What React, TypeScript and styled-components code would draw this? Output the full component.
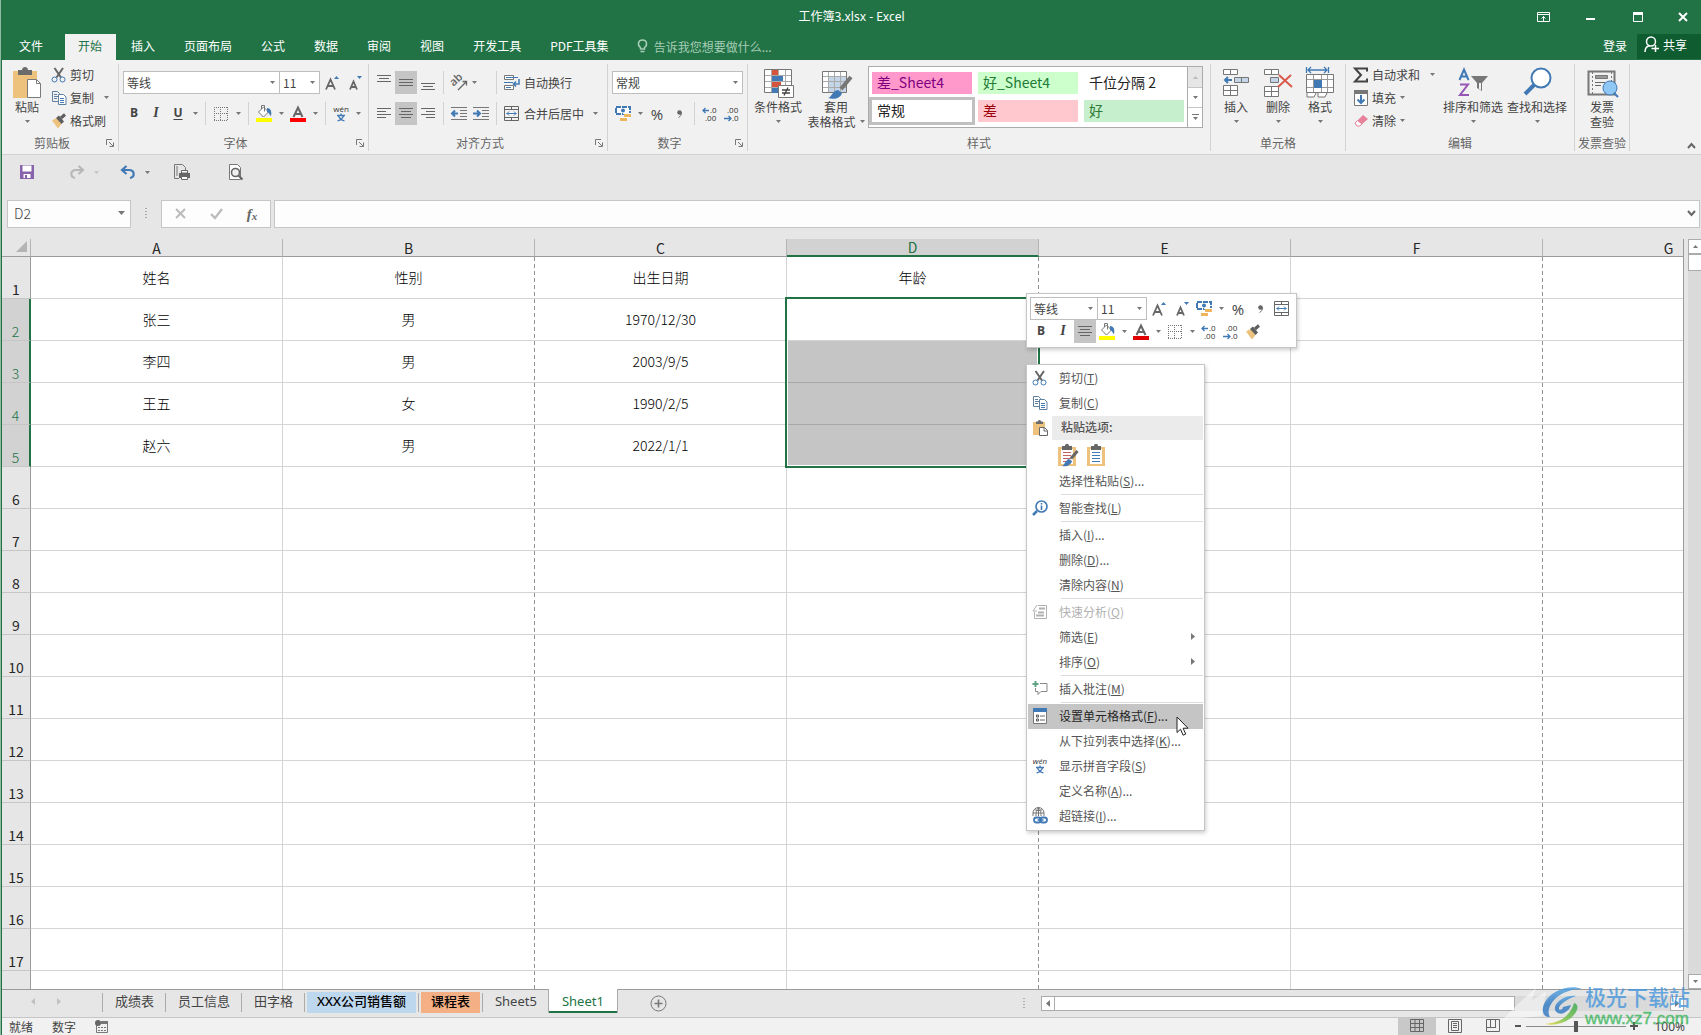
import React from "react";
import styled, { createGlobalStyle, css } from "styled-components";

const GREEN = "#217346";
const INK = "#444";
const GREY = "#777";
const BLUE = "#4179b5";

const Global = createGlobalStyle`
  *, *::after { box-sizing: border-box; }
  body { margin: 0; overflow: hidden; }
  button, input, select { font: inherit; color: inherit; margin: 0; padding: 0; border: 0; background: none; border-radius: 0; }
  input:focus { outline: none; }
  svg { display: block; flex: none; overflow: visible; }
`;

/* ---------- window shell ---------- */
const Window = styled.div`
  position: relative;
  display: flex;
  flex-direction: column;
  height: 100vh;
  border-left: 1px solid #8fb9a1;
  padding-left: 1px;
  background: ${GREEN};
  color: ${INK};
  font: 12px/15px "Noto Sans CJK SC", "Noto Sans", sans-serif;
`;
const TitleBar = styled.header`
  display: grid;
  grid-template-columns: 1fr auto 1fr;
  align-items: center;
  height: 34px;
  color: #fff;
`;
const Title = styled.h1`
  grid-column: 2;
  margin: 0;
  font: 12px/16px "Noto Sans", "Noto Sans CJK SC", sans-serif;
`;
const WindowButtons = styled.div`
  display: flex;
  justify-content: flex-end;
`;
const WindowButton = styled.button`
  display: grid;
  place-items: center;
  width: 47px;
  height: 30px;
  &:last-child { width: 40px; padding-left: 4px; }
`;
const TabBar = styled.nav`
  display: flex;
  height: 26px;
  color: #fff;
`;
const Tab = styled.button<{ $active?: boolean; $file?: boolean }>`
  padding: 0 14px 4px 15px;
  white-space: nowrap;
  ${p => p.$file && css`padding-left: 17px; padding-right: 22px;`}
  ${p => p.$active && css`padding-left: 13px; background: #f1f1f1; color: ${GREEN};`}
`;
const TellMe = styled.label`
  display: flex;
  align-items: center;
  gap: 6px;
  flex: 1;
  padding: 0 14px 2px;
  color: #a6cdb6;
  input { width: 140px; }
  input::placeholder { color: #a6cdb6; opacity: 1; }
`;
const Account = styled.button`padding: 0 10px 4px;`;
const Share = styled.button`
  display: flex;
  align-items: center;
  gap: 4px;
  width: 64px;
  height: 25px;
  padding: 0 0 4px 7px;
  background: #0e5c2f;
`;

/* ---------- ribbon ---------- */
const Ribbon = styled.section`
  display: flex;
  height: 95px;
  padding: 4px 0 3px;
  background: #f1f1f1;
  border-bottom: 1px solid #d2d2d2;
`;
const Group = styled.div<{ $w: number }>`
  display: flex;
  flex-direction: column;
  flex: none;
  width: ${p => p.$w}px;
  border-right: 1px solid #d2d2d2;
`;
const GroupBody = styled.div<{ $pad?: number }>`
  display: flex;
  height: 70px;
  padding-left: ${p => p.$pad ?? 4}px;
`;
const GroupFoot = styled.div`
  display: flex;
  align-items: center;
  height: 17px;
  color: #666;
  span { flex: 1; text-align: center; white-space: nowrap; }
`;
const Launcher = styled.button`
  display: grid;
  place-items: center;
  width: 16px;
  height: 12px;
`;
const BigButton = styled.button<{ $w: number }>`
  display: flex;
  flex-direction: column;
  align-items: center;
  flex: none;
  width: ${p => p.$w}px;
  padding-top: 3px;
  white-space: nowrap;
`;
const LastLine = styled.span`
  display: flex;
  align-items: center;
  gap: 4px;
  height: 15px;
`;
const SmallColumn = styled.div<{ $w: number }>`
  display: flex;
  flex-direction: column;
  width: ${p => p.$w}px;
  margin-top: -1px;
`;
const SmallButton = styled.button<{ $far?: boolean }>`
  display: flex;
  align-items: center;
  height: 23px;
  white-space: nowrap;
  span { margin: 0 ${p => (p.$far ? 10 : 4)}px 0 3px; }
`;
const TwoRows = styled.div`
  display: flex;
  flex-direction: column;
  gap: 8px;
  padding-top: 7px;
`;
const ToolRow = styled.div`
  display: flex;
  height: 23px;
`;
const Tool = styled.button<{ $w?: number; $on?: boolean; $left?: boolean }>`
  display: flex;
  align-items: center;
  justify-content: ${p => (p.$left ? "flex-start" : "center")};
  flex: none;
  gap: 4px;
  width: ${p => p.$w ?? 22}px;
  height: 23px;
  padding-left: ${p => (p.$left ? 3 : 0)}px;
  white-space: nowrap;
  background: ${p => (p.$on ? "#c5c5c5" : "transparent")};
`;
const Glyph = styled.span<{ $italic?: boolean; $under?: boolean }>`
  padding-bottom: 2px;
  font: ${p => (p.$italic ? "italic 700 14px/16px 'Liberation Serif', serif" : "700 12px/16px 'Open Sans', sans-serif")};
  text-decoration: ${p => (p.$under ? "underline" : "none")};
  text-underline-offset: 2px;
`;
const Divider = styled.span`
  flex: none;
  width: 1px;
  height: 23px;
  margin: 0 4px;
  background: #d2d2d2;
`;
const ComboBox = styled.span<{ $w: number }>`
  display: grid;
  align-items: center;
  width: ${p => p.$w}px;
  height: 23px;
  background: #fff;
  border: 1px solid #bebebe;
  & + & { border-left-width: 0; }
  select, svg { grid-area: 1 / 1; }
  select { width: 100%; height: 100%; padding-left: 3px; appearance: none; outline: none; }
  svg { justify-self: end; margin-right: 4px; pointer-events: none; }
`;
const Percent = styled.span`font: 15px/20px "Open Sans", sans-serif;`;

/* ---------- style gallery ---------- */
const Gallery = styled.div`
  display: flex;
  width: 335px;
  height: 62px;
  margin: 2px 0 0 1px;
  background: #fff;
  border: 1px solid #ababab;
`;
const Swatches = styled.div`
  display: grid;
  grid-template-columns: repeat(3, 100px);
  grid-auto-rows: 22px;
  gap: 6px;
  flex: 1;
  padding: 5px 3px;
`;
const Swatch = styled.button<{ $bg: string; $fg: string; $picked?: boolean }>`
  padding: 0 0 2px 5px;
  text-align: left;
  font-size: 14px;
  line-height: 20px;
  background: ${p => p.$bg};
  color: ${p => p.$fg};
  outline: ${p => (p.$picked ? "3px solid #c0c0c0" : "none")};
`;
const GalleryScroll = styled.div`
  display: grid;
  grid-template-rows: repeat(3, 1fr);
  width: 15px;
  border-left: 1px solid #ababab;
  button { display: grid; place-items: center; }
  button + button { border-top: 1px solid #c6c6c6; }
  button:first-child { background: #e6e6e6; }
`;
const Collapse = styled.button`
  align-self: flex-end;
  margin: 0 5px 2px auto;
`;

/* ---------- quick access + formula bar ---------- */
const QuickAccess = styled.div`
  display: flex;
  align-items: center;
  height: 34px;
  padding-left: 17px;
  background: #e6e6e6;
  button { display: flex; align-items: center; height: 24px; }
`;
const QuickSlot = styled.div<{ $w: number }>`
  display: flex;
  align-items: center;
  gap: 9px;
  width: ${p => p.$w}px;
`;
const FormulaRow = styled.div`
  display: flex;
  align-items: center;
  height: 40px;
  padding: 10px 1px 1px 5px;
  background: #e6e6e6;
`;
const Field = styled.div<{ $w?: number }>`
  display: flex;
  align-items: center;
  flex: ${p => (p.$w ? "none" : "1")};
  width: ${p => (p.$w ? `${p.$w}px` : "auto")};
  height: 28px;
  background: #fdfdfd;
  border: 1px solid #c6c6c6;
  padding: 0 ${p => (p.$w ? 5 : 3)}px 1px 6px;
  input { flex: 1; min-width: 0; font-size: 14px; line-height: 20px; font-weight: 300; }
`;
const FormulaButtons = styled.div`
  display: grid;
  grid-template-columns: repeat(3, 1fr);
  width: 110px;
  height: 28px;
  margin-right: 3px;
  background: #fdfdfd;
  border: 1px solid #c6c6c6;
  button { display: grid; place-items: center; }
`;
const Grip = styled.span`
  display: flex;
  justify-content: center;
  width: 30px;
`;
const Fx = styled.i`
  font: italic 700 15px/18px "Liberation Serif", serif;
  color: #666;
  sub { font-size: 11px; line-height: 11px; vertical-align: -1px; }
`;

/* ---------- sheet ---------- */
const SheetArea = styled.main`
  position: relative;
  display: flex;
  flex: 1;
  min-height: 0;
  padding-top: 10px;
  background: #e6e6e6;
  overflow: hidden;
`;
const GridView = styled.div`
  flex: 1;
  min-width: 0;
  overflow: hidden;
  border-right: 1px solid #9b9b9b;
  background: linear-gradient(#e6e6e6 18px, #fff 18px);
`;
const Grid = styled.table`
  width: 1793px;
  table-layout: fixed;
  border-collapse: separate;
  border-spacing: 0;
  font-size: 14px;
  line-height: 18px;
  font-weight: 300;
  color: #000;
`;
const ColHead = styled.th<{ $w: number; $sel?: boolean }>`
  width: ${p => p.$w}px;
  height: 18px;
  padding: 0;
  line-height: 16px;
  font-weight: 400;
  border-right: 1px solid #b4b4b4;
  border-bottom: ${p => (p.$sel ? `2px solid ${GREEN}` : "1px solid #9b9b9b")};
  background: ${p => (p.$sel ? "#d2d2d2" : "#e6e6e6")};
  color: ${p => (p.$sel ? GREEN : "#262626")};
  svg { margin: 0 3px 2px auto; }
`;
const RowHead = styled.th<{ $sel?: boolean }>`
  height: 42px;
  padding: 0 0 1px;
  vertical-align: bottom;
  line-height: 16px;
  font-weight: ${p => (p.$sel ? 300 : 400)};
  border-right: ${p => (p.$sel ? `2px solid ${GREEN}` : "1px solid #9b9b9b")};
  border-bottom: 1px solid #c6c6c6;
  background: ${p => (p.$sel ? "#d2d2d2" : "#e6e6e6")};
  color: ${p => (p.$sel ? GREEN : "#262626")};
`;
const Cell = styled.td<{ $dashed?: boolean; $fill?: boolean; $anchor?: boolean }>`
  position: relative;
  padding: 0 0 2px;
  text-align: center;
  border-bottom: 1px solid ${p => (p.$fill ? "#a8a8a8" : "#d4d4d4")};
  border-right: ${p => (p.$dashed ? "0" : "1px solid #d4d4d4")};
  background-color: ${p => (p.$fill ? "#c5c5c5" : "#fff")};
  ${p => p.$dashed && css`
    padding-right: 1px;
    background: repeating-linear-gradient(#929292 0 4px, transparent 4px 7px) right / 1px 100% no-repeat #fff;
  `}
  ${p => p.$dashed && p.$fill && css`background: #c5c5c5;`}
  ${p => p.$anchor && css`
    &::after {
      content: "";
      position: absolute;
      z-index: 1;
      left: -2px;
      right: -1px;
      top: -2px;
      height: 171px;
      border: 2px solid ${GREEN};
      box-shadow: inset 0 0 0 1px #fff;
    }
  `}
`;
const VScroll = styled.div`
  display: flex;
  flex-direction: column;
  width: 13px;
  margin-left: 4px;
  background: #dadada;
  span { height: 17px; background: #fff; border: 1px solid #ababab; border-right: 0; }
  button:last-child { margin-top: auto; }
`;
const ScrollButton = styled.button`
  display: grid;
  place-items: center;
  width: 14px;
  height: 15px;
  background: #fff;
  border: 1px solid #ababab;
`;

/* ---------- popups over the grid ---------- */
const Popup = styled.div`
  position: absolute;
  z-index: 2;
  left: 1024px;
  background: #fff;
  border: 1px solid #c6c6c6;
  box-shadow: 1px 2px 4px rgba(0, 0, 0, 0.2);
`;
const MiniToolbar = styled(Popup)`
  top: 64px;
  width: 271px;
  padding: 3px 3px 4px;
`;
const ContextMenu = styled(Popup)`
  top: 135px;
  width: 179px;
  padding: 1px;
  color: #555;
`;
const MenuItem = styled.button<{ $hot?: boolean; $off?: boolean }>`
  display: flex;
  align-items: center;
  width: 100%;
  height: 25px;
  padding-bottom: 2px;
  text-align: left;
  background: ${p => (p.$hot ? "#c5c5c5" : "transparent")};
  color: ${p => (p.$off ? "#b1b1b1" : p.$hot ? "#262626" : "inherit")};
  & > span { flex: 1; white-space: nowrap; }
  & > svg { margin-right: 8px; }
`;
const MenuIcon = styled.i`
  display: grid;
  place-items: center;
  width: 24px;
  margin-right: 7px;
`;
const MenuHeading = styled.div`
  display: flex;
  align-items: center;
  height: 24px;
  ${MenuIcon} { margin-right: 0; }
  b { flex: 1; padding: 0 0 2px 9px; line-height: 22px; font-weight: 500; background: #ebebeb; }
`;
const PasteRow = styled.div`
  display: flex;
  gap: 7px;
  height: 29px;
  padding: 2px 0 0 29px;
`;
const MenuLine = styled.hr`
  height: 1px;
  margin: 0 0 1px 33px;
  border: 0;
  background: #dcdcdc;
`;
const Pointer = styled.svg`
  position: absolute;
  z-index: 3;
  left: 1174px;
  top: 487px;
`;

/* ---------- sheet tabs + status ---------- */
const SheetBar = styled.div`
  display: flex;
  height: 28px;
  background: #e6e6e6;
  border-top: 1px solid #9b9b9b;
  font: 13px/16px "Noto Sans", "Noto Sans CJK SC", sans-serif;
`;
const SheetNav = styled.div`
  display: flex;
  width: 100px;
  padding: 0 30px 4px 18px;
  button { flex: 1; display: grid; place-items: center; }
`;
const SheetTab = styled.button<{ $active?: boolean; $tint?: string }>`
  display: flex;
  align-items: flex-start;
  height: 24px;
  padding: 2px 2px 0 3px;
  white-space: nowrap;
  background: linear-gradient(#ababab, #ababab) 0 3px / 1px 19px no-repeat;
  span { padding: 0 9px 3px 10px; line-height: 18px; background: ${p => p.$tint ?? "transparent"}; }
  ${p => p.$tint && css`
    color: #000;
    font-weight: 500;
    span { padding: 0 10px 3px; }
  `}
  ${p => p.$active && css`
    margin-top: -1px;
    padding: 3px 3px 0;
    background: #fff;
    color: ${GREEN};
    border: solid #ababab;
    border-width: 0 1px;
    box-shadow: inset 0 -2px ${GREEN};
    span { padding: 0 10px 3px; }
  `}
`;
const AddSheet = styled.button`margin: 0 0 1px 32px;`;
const HScroll = styled.div`
  display: flex;
  align-items: center;
  gap: 16px;
  width: 661px;
  margin: 0 17px 0 auto;
`;
const HTrack = styled.div`
  display: flex;
  flex: 1;
  height: 15px;
  background: #dadada;
  span { width: 461px; margin-left: -1px; background: #fff; border: 1px solid #ababab; }
  button:last-child { margin-left: auto; }
`;
const StatusBar = styled.footer`
  display: flex;
  align-items: center;
  height: 18px;
  padding: 0 0 1px 7px;
  background: #f1f1f1;
  border-top: 1px solid #c6c6c6;
`;
const StatusText = styled.span`margin-right: 19px;`;
const ViewButton = styled.button<{ $on?: boolean }>`
  display: grid;
  place-items: center;
  width: 38px;
  height: 17px;
  background: ${p => (p.$on ? "#c8c8c8" : "transparent")};
`;
const Views = styled.div`
  display: flex;
  margin-left: auto;
`;
const ZoomBox = styled.div`
  display: flex;
  align-items: center;
  gap: 4px;
  margin-right: 16px;
  span { width: 43px; text-align: right; font-family: "Noto Sans", sans-serif; }
`;
const ZoomSlider = styled.input`
  width: 100px;
  height: 12px;
  appearance: none;
  background: linear-gradient(#8a8a8a, #8a8a8a) center / 100% 1px no-repeat;
  &::-webkit-slider-thumb { appearance: none; width: 4px; height: 11px; background: #555; }
`;
const Watermark = styled.div`
  position: absolute;
  right: 11px;
  bottom: 7px;
  display: flex;
  align-items: center;
  gap: 1px;
  opacity: 0.8;
  pointer-events: none;
`;
const WatermarkText = styled.div`
  color: #4596dc;
  font-size: 21px;
  line-height: 24px;
  font-weight: 500;
  small { display: block; margin-top: 2px; color: #35b558; font: 17px/18px "Liberation Sans", sans-serif; -webkit-text-stroke: 0.4px #35b558; }
`;

/* ---------- icons ---------- */
type IconProps = { w: number; h: number; children: React.ReactNode };
const Icon = ({ w, h, children }: IconProps) => (
  <svg width={w} height={h} viewBox={`0 0 ${w} ${h}`} fill="none" aria-hidden="true">{children}</svg>
);
const Arrow = ({ color = GREY, up = false }: { color?: string; up?: boolean }) => (
  <Icon w={5} h={3}><path d={up ? "M0 3h5L2.500 0z" : "M0 0h5L2.500 3z"} fill={color} /></Icon>
);
const SideArrow = ({ left = false, color = GREY }: { left?: boolean; color?: string }) => (
  <Icon w={4} h={7}><path d={left ? "M4 0v7L0 3.500z" : "M0 0v7l4-3.500z"} fill={color} /></Icon>
);
const LauncherIcon = () => (
  <Icon w={8} h={8}><path d="M.5 6V.5H6M3 3l4 4M7.500 3.500v4h-4" stroke={GREY} /></Icon>
);
const Cut = () => (
  <Icon w={16} h={16}>
    <path d="M3.500 1 10 10.500M12 1 5.500 10.500" stroke="#666" strokeWidth="2" />
    <circle cx="3.500" cy="12.500" r="2.500" stroke={BLUE} /><circle cx="11.500" cy="12.500" r="2.500" stroke={BLUE} />
  </Icon>
);
const Copy = () => (
  <Icon w={16} h={16}>
    <path d="M1.500 1.500h5l2 2v8h-7zM3 4.500h3M3 6.500h4M3 8.500h3" stroke="#5f7f9f" />
    <path d="M7.500 4.500h5l2.500 2.500v7.500H7.500z" fill="#fff" stroke="#5f7f9f" /><path d="M9 8.500h4M9 10.500h4M9 12.500h4" stroke={BLUE} />
  </Icon>
);
const Painter = () => (
  <Icon w={16} h={16}>
    <path d="M1 7.500 5.500 5l5 6L7 15.500z" fill="#ecc27c" /><path d="m5 5 3-2.500 5 6-2.500 2.500z" fill="#5e5e5e" /><path d="m10 5 4-3.500" stroke="#5e5e5e" strokeWidth="3" />
  </Icon>
);
const PasteBig = () => (
  <Icon w={32} h={32}>
    <path d="M2 4h24v27H2z" fill="#ecc27c" /><path d="M7 3h4c0-4 6-4 6 0h4v5H7z" fill="#6b6b6b" />
    <path d="M16.500 12.500h9l4 4v14h-13z" fill="#fff" stroke="#7a7a7a" /><path d="M25.500 12.500v4h4" stroke="#7a7a7a" />
  </Icon>
);
const PasteSmall = () => (
  <Icon w={16} h={16}>
    <path d="M1 2h12v13H1z" fill="#ecc27c" /><path d="M4 1.500h2c0-2 3-2 3 0h2V4H4z" fill="#6b6b6b" />
    <path d="M7.500 7.500h5l3 3v5h-8z" fill="#fff" stroke="#666" /><path d="M12 7.500v3.500h3" stroke="#666" />
  </Icon>
);
const PasteOption = ({ brush = false }: { brush?: boolean }) => (
  <Icon w={22} h={23}>
    <path d="M1 3h18v19H1z" fill="#ecc27c" /><path d="M4 5h12v15H4z" fill="#fff" /><path d="M5 2h3c0-3 4-3 4 0h3v4H5z" fill="#666" />
    <path d="M6 8.500h8M6 11.500h8M6 14.500h8M6 17.500h8" stroke={brush ? "#c76060" : BLUE} />
    {brush && <><path d="M20.500 7 14 14.500" stroke="#666" strokeWidth="3" /><path d="M5 22c3-1 3-6 7-7l3 2c-1 4-5 6-10 5z" fill={BLUE} /></>}
  </Icon>
);
const FontSize = ({ up = false }: { up?: boolean }) => (
  <Icon w={14} h={14}>
    <path d={up ? "M1 13.500 5.500 3.500 10 13.500M2.500 10h6" : "M2 13.500 5.500 5.500 9 13.500M3.500 11h4"} stroke="#666" strokeWidth="1.800" />
    <path d={up ? "M9 3h5l-2.500-3z" : "M9 0h5l-2.500 3z"} fill={BLUE} />
  </Icon>
);
const Borders = () => (
  <Icon w={14} h={14}><path d="M.5 0v14M6.500 0v14M13.500 0v14M0 .5h14M0 6.500h14" stroke="#777" strokeDasharray="1 1" /><path d="M0 13.500h14" stroke="#777" strokeDasharray="1 1" /></Icon>
);
const Fill = () => (
  <Icon w={17} h={17}>
    <path d="m2.500 7 5-5 5 5-5 5z" fill="#fff" stroke="#777" /><path d="M5.500 4V.500h3v6" stroke="#777" /><path d="M11 3c4 0 5 4 4 8-2-1-1-3-4-4z" fill={BLUE} /><path d="M0 13h16v4H0z" fill="#ff0" />
  </Icon>
);
const FontColor = ({ red = "#f00" }: { red?: string }) => (
  <Icon w={16} h={16}><path d="M3.500 11 8 1.500 12.500 11M5 8h6" stroke="#666" strokeWidth="2" /><path d="M0 12h16v4H0z" fill={red} /></Icon>
);
const Pinyin = () => (
  <Icon w={16} h={17}>
    <text x="8" y="7" textAnchor="middle" fontSize="8" fontFamily="Open Sans, sans-serif" fill="#333">wén</text>
    <path d="M4 10.500h8M8 8.500v2M5.500 11c1 2.500 3 4 6 5M10.500 11c-1 2.500-3 4-6 5" stroke={BLUE} strokeWidth="1.300" />
  </Icon>
);
const Lines = ({ d }: { d: string }) => <Icon w={14} h={15}><path d={d} stroke="#666" /></Icon>;
const TOP = "M0 .500h14M2 3.500h10M0 6.500h14";
const MID = "M0 4.500h14M0 7.500h14M0 10.500h14";
const BOT = "M0 8.500h14M2 11.500h10M0 14.500h14";
const LEFT = "M0 2.500h14M0 5.500h9M0 8.500h14M0 11.500h9";
const CENTER = "M0 2.500h14M2 5.500h10M0 8.500h14M2 11.500h10";
const RIGHT = "M0 2.500h14M5 5.500h9M0 8.500h14M5 11.500h9";
const Orient = () => (
  <Icon w={17} h={17}>
    <text x="0" y="10" fontSize="11" fontWeight="600" fontFamily="Open Sans, sans-serif" fill="#666" transform="rotate(-42 5 8)">ab</text>
    <path d="m7 16 8-8M11.500 7.500H15.500V11.500" stroke="#666" strokeWidth="1.300" />
  </Icon>
);
const Indent = ({ more = false }: { more?: boolean }) => (
  <Icon w={16} h={14}>
    <path d="M0 .500h16M9 3.500h7M9 6.500h7M9 9.500h7M0 12.500h16" stroke="#777" />
    <path d={more ? "M0 6.500h7M4 3.500l3 3-3 3" : "M7 6.500H1M4 3.500l-3 3 3 3"} stroke={BLUE} strokeWidth="2" />
  </Icon>
);
const Wrap = () => (
  <Icon w={16} h={16}>
    <path d="M.5.500h9v4h-9zM.5 10.500h9v4h-9z" fill="#fff" stroke="#777" /><path d="M2 2.500h12M0 7.500h9M2 12.500h5" stroke={BLUE} /><path d="M15 4v5h-5M12 6.500 9.500 9l2.500 2.500" stroke={BLUE} strokeWidth="1.500" />
  </Icon>
);
const Merge = () => (
  <Icon w={16} h={16}>
    <path d="M.5.500h14v14H.5zM0 3.500h15M0 11.500h15M7.500 0v3.500M7.500 11v4" stroke="#666" /><path d="M2.500 7.500h10M5 5.500l-2 2 2 2M10 5.500l2 2-2 2" stroke={BLUE} />
  </Icon>
);
const Currency = () => (
  <Icon w={17} h={16}>
    <path d="M1 1h14v7H1z" fill="#fff" stroke={BLUE} strokeWidth="2" strokeDasharray="5 1" /><circle cx="8" cy="4.500" r="2" fill={BLUE} />
    <path d="M9 8h7v3H9zM5 12h7v3H5z" fill="#ecb65c" /><path d="M8 7.500h8M5 11.500h11" stroke="#fff" />
  </Icon>
);
const Comma = () => <Icon w={5} h={8}><circle cx="2.500" cy="2.500" r="2.300" fill="#666" /><path d="M4.500 2.500c0 2-1 4-3 5" stroke="#666" /></Icon>;
const Decimal = ({ more = false }: { more?: boolean }) => (
  <Icon w={16} h={16}>
    <text x={more ? 8 : 3} y="7" fontSize="8" fontFamily="Open Sans, sans-serif" fill="#333">{more ? ".0" : ".00"}</text>
    <text x={more ? 3 : 8} y="15" fontSize="8" fontFamily="Open Sans, sans-serif" fill="#333">{more ? ".00" : ".0"}</text>
    <path d={more ? "M7 4.500H1M3.500 2 1 4.500 3.500 7" : "M0 12.500h7M4.500 10 7 12.500 4.500 15"} stroke={BLUE} strokeWidth="1.300" />
  </Icon>
);
const CondFormat = () => (
  <Icon w={32} h={32}>
    <path d="M2.500 2.500h27v23h-27z" fill="#fff" stroke="#777" /><path d="M3 8.500h26M3 14.500h26M3 20.500h26M9.500 3v22M16.500 3v22M23.500 3v22" stroke="#aaa" />
    <path d="M10 3h6v5h-6zM10 15h9v5h-9z" fill="#d5553c" /><path d="M10 9h11v5H10zM10 21h6v5h-6z" fill={BLUE} />
    <path d="M16.500 18.500h15v12h-15z" fill="#fff" stroke="#777" /><path d="M20 23h8M20 26h8M26 20.500l-4 8" stroke="#444" strokeWidth="1.300" />
  </Icon>
);
const TableFormat = () => (
  <Icon w={32} h={32}>
    <path d="M2.500 4.500h24v21h-24z" fill="#fff" stroke="#777" /><path d="M8 10h18v15H8z" fill="#c5d5e8" /><path d="M3 9.500h23M3 14.500h23M3 20.500h23M8.500 5v20M14.500 5v20M20.500 5v20" stroke="#aaa" />
    <path d="M31 10 21 22" stroke="#777" strokeWidth="4" /><path d="M8 31c4-1 4-7 10-8l4 3c-1 5-8 7-14 5z" fill={BLUE} />
  </Icon>
);
const InsertCells = () => (
  <Icon w={28} h={32}>
    <path d="M1.500 2.500h14v5h-14zM8.500 2.500v5M1.500 18.500h14v10h-14zM8.500 18.500v10M1.500 23.500h14" fill="#fff" stroke="#777" /><path d="M12.500 10.500h14v5h-14zM19.500 10.500v5" fill="#c5d5e8" stroke="#777" /><path d="M10 13H3M6 10l-3 3 3 3" stroke={BLUE} strokeWidth="2" />
  </Icon>
);
const DeleteCells = () => (
  <Icon w={30} h={32}>
    <path d="M1.500 2.500h14v5h-14zM8.500 2.500v5M1.500 19.500h14v10h-14zM8.500 19.500v10M1.500 24.500h14" fill="#fff" stroke="#777" /><path d="M7.500 10.500h8v5h-8z" fill="#c5d5e8" stroke="#777" /><path d="m16 8 13 12M28 8 15 20" stroke="#d9594c" strokeWidth="2" />
  </Icon>
);
const FormatCells = () => (
  <Icon w={30} h={32}>
    <path d="M1.500 0v6M23.500 0v6M3 3h19M6 0 3 3l3 3M19 0l3 3-3 3" stroke={BLUE} strokeWidth="1.300" />
    <path d="M2 26v4h7l2-4M13 26v4h7l2-4" fill="#fff" stroke="#777" /><path d="M1.500 7.500h27v18h-27z" fill="#fff" stroke="#777" /><path d="M2 12.500h26M2 20.500h26M8.500 8v17M16.500 8v17M22.500 8v17" stroke="#999" /><path d="M9 13h8v8H9z" fill={BLUE} />
  </Icon>
);
const Sigma = () => <Icon w={16} h={16}><path d="M14 4.500V1.500H2l6 6.500-6 6.500h12v-3" stroke="#444" strokeWidth="2" /></Icon>;
const FillDown = () => (
  <Icon w={16} h={16}><path d="M1.500.500h13v15h-13z" fill="#fff" stroke="#777" /><path d="M1 0h14v4H1z" fill="#777" /><path d="M8 5v8M4.500 9.500 8 13l3.500-3.500" stroke={BLUE} strokeWidth="2" /></Icon>
);
const Eraser = () => <Icon w={16} h={16}><path d="m2 10 8-8 5 4-8 7H4z" fill="#e8829b" /><path d="m2 10 2.500-2.500L9 11l-2 2H4z" fill="#fff" stroke="#e8829b" /></Icon>;
const SortFilter = () => (
  <Icon w={32} h={32}>
    <path d="M2.500 13 7 2.500 11.500 13M4 9.500h6" stroke={BLUE} strokeWidth="2" /><path d="M3 17.500h8L3 28h9" stroke="#9457b5" strokeWidth="2" />
    <path d="M14 9h17l-6 7v8l-5-3v-5z" fill="#777" /><path d="M22 16v6l2 1v-7" fill="#f1f1f1" />
  </Icon>
);
const Find = ({ info = false }: { info?: boolean }) =>
  info ? (
    <Icon w={16} h={16}><circle cx="9.500" cy="6.500" r="5.500" stroke={BLUE} strokeWidth="1.600" fill="#fff" /><path d="m5 11-4 4" stroke={BLUE} strokeWidth="2.500" /><path d="M9.500 3v1.500M9.500 5.500V10" stroke={BLUE} strokeWidth="1.600" /></Icon>
  ) : (
    <Icon w={32} h={32}><circle cx="20" cy="11" r="9.500" fill="#fff" stroke={BLUE} strokeWidth="2" /><path d="M13 18 4 27" stroke={BLUE} strokeWidth="4" /></Icon>
  );
const Invoice = () => (
  <Icon w={32} h={32}>
    <path d="M2.500 4.500h26v23h-26z" stroke="#777" strokeWidth="2" /><path d="M6.500 5v22M25.500 5v10" stroke="#777" strokeDasharray="2 2" /><path d="M9.500 8.500h12v3h-12z" fill="#999" stroke="#777" /><path d="M9 15.500h10M9 18.500h6" stroke="#666" /><circle cx="24" cy="21" r="7" fill="#8fc7f5" stroke={BLUE} /><path d="m28 26 4 4" stroke={BLUE} strokeWidth="2" />
  </Icon>
);
const Save = () => (
  <Icon w={16} h={16}><path d="M1 1h14v14H1z" fill="#8763ab" /><path d="M3.500 1.500h9v6h-9z" fill="#fff" /><path d="M4.500 10h7v4h-7z" fill="#fff" /><path d="M6 11h2v3H6z" fill="#8763ab" /></Icon>
);
const Undo = ({ redo = false }: { redo?: boolean }) => (
  <Icon w={16} h={14}>
    <g transform={redo ? "matrix(-1 0 0 1 16 0)" : undefined}><path d="M2 5h7c6 0 6 7 1 8M6.500 1 2 5l4.500 4" stroke={redo ? "#b8b8b8" : BLUE} strokeWidth="2.200" /></g>
  </Icon>
);
const QuickPrint = () => (
  <Icon w={18} h={18}><path d="M1.500 1.500h8l3 3V8M1.500 1.500v14H6M4 3v10" stroke="#777" /><path d="M6 10h11v5H6z" fill="#666" /><path d="M8.500 7.500h6V10h-6zM8.500 13.500h6v3h-6z" fill="#fff" stroke="#666" /></Icon>
);
const Preview = () => (
  <Icon w={16} h={18}><path d="M1.500 1.500h8l3 3v12h-11z" fill="#fff" stroke="#777" /><circle cx="7.500" cy="9.500" r="4" stroke="#666" strokeWidth="1.600" fill="#eee" /><path d="m10.500 12.500 4 4" stroke="#666" strokeWidth="2.200" /></Icon>
);
const Dots = () => <Icon w={2} h={11}><path d="M1 0v11" stroke="#aaa" strokeWidth="2" strokeDasharray="1 2" /></Icon>;
const Chevron = ({ up = false }: { up?: boolean }) => <Icon w={9} h={7}><path d={up ? "m1 6 3.500-4L8 6" : "m1 1 3.500 4L8 1"} stroke="#666" strokeWidth="2" /></Icon>;
const Analysis = () => (
  <Icon w={16} h={16}><path d="M6 1.500h8.500v13h-12V8M5 1 1 7h4" stroke="#b1b1b1" /><path d="M7 4.500h6M6 8.500h6M4 11.500h8" stroke="#b1b1b1" strokeWidth="2" /></Icon>
);
const Comment = () => <Icon w={16} h={16}><path d="M8 2.500h7v8H9l-3 3v-3H3.500V7" stroke="#888" /><path d="M3.500 0v6M.500 3h6" stroke="#5fa184" strokeWidth="2" /></Icon>;
const FormatDialog = () => (
  <Icon w={16} h={16}><path d="M1.500.500h13v15h-13z" fill="#fff" stroke="#777" /><path d="M1 0h14v4H1z" fill={BLUE} /><path d="M4.500 7h2v2h-2zM4.500 11h2v2h-2z" stroke="#555" /><path d="M8 8h5M8 12h5" stroke="#666" /></Icon>
);
const Link = () => (
  <Icon w={16} h={17}>
    <path d="M1 9V6a5.500 5.500 0 0 1 11 0v3M1 6h11M6.500.500V9M2.500 2.500c2 1.500 6 1.500 8 0M6.500.500C4 3 4 6 4 9M6.500.500C9 3 9 6 9 9" stroke="#777" />
    <rect x="2" y="10.500" width="7" height="5" rx="2.500" fill="#fff" stroke={BLUE} strokeWidth="1.800" /><rect x="8" y="10.500" width="7" height="5" rx="2.500" stroke={BLUE} strokeWidth="1.800" /><path d="M5.500 13h6" stroke={BLUE} strokeWidth="1.600" />
  </Icon>
);
const ViewIcon = ({ d }: { d: string }) => <Icon w={14} h={14}><path d={d} stroke="#666" /></Icon>;
const Nudge = () => <Icon w={4} h={1}>{null}</Icon>;

/* ---------- data ---------- */
const COLUMNS = ["A", "B", "C", "D", "E", "F", "G"];
const DASHED = [1, 3, 5];
const DATA: string[][] = [
  ["姓名", "性别", "出生日期", "年龄"],
  ["张三", "男", "1970/12/30", ""],
  ["李四", "男", "2003/9/5", ""],
  ["王五", "女", "1990/2/5", ""],
  ["赵六", "男", "2022/1/1", ""],
];
const ROWS = Array.from({ length: 18 }, (_, i) => i + 1);

type Entry = { text: string; k: string; more?: boolean; icon?: React.ReactNode; sub?: boolean; off?: boolean; hot?: boolean };
const Item = ({ text, k, more, icon, sub, off, hot }: Entry) => (
  <MenuItem role="menuitem" $hot={hot} $off={off} disabled={off}>
    <MenuIcon>{icon}</MenuIcon>
    <span>{text}(<u>{k}</u>){more ? "..." : ""}</span>
    {sub && <SideArrow />}
  </MenuItem>
);
const Combo = ({ w, label, value }: { w: number; label: string; value: string }) => (
  <ComboBox $w={w}><select aria-label={label} defaultValue={value}><option>{value}</option></select><Arrow /></ComboBox>
);
const Foot = ({ name, launcher }: { name: string; launcher?: boolean }) => (
  <GroupFoot><span>{name}</span>{launcher && <Launcher aria-label={`${name}设置`}><LauncherIcon /></Launcher>}</GroupFoot>
);
const Drop = ({ label, w = 12 }: { label: string; w?: number }) => <Tool $w={w} aria-label={label}><Arrow /></Tool>;

const RibbonBar = () => (
  <Ribbon>
    <Group $w={117}>
      <GroupBody $pad={5}>
        <BigButton $w={40}><PasteBig />粘贴<LastLine><Arrow /></LastLine></BigButton>
        <SmallColumn $w={70}>
          <SmallButton><Nudge /><Cut /><span>剪切</span></SmallButton>
          <SmallButton $far><Nudge /><Copy /><span>复制</span><Arrow /></SmallButton>
          <SmallButton><Nudge /><Painter /><span>格式刷</span></SmallButton>
        </SmallColumn>
      </GroupBody>
      <Foot name="剪贴板" launcher />
    </Group>

    <Group $w={250}>
      <GroupBody>
        <TwoRows>
          <ToolRow>
            <Combo w={157} label="字体" value="等线" /><Combo w={40} label="字号" value="11" />
            <Tool $w={24} aria-label="增大字号"><FontSize up /></Tool><Tool aria-label="减小字号"><FontSize /></Tool>
          </ToolRow>
          <ToolRow>
            <Tool><Glyph>B</Glyph></Tool><Tool><Glyph $italic>I</Glyph></Tool><Tool><Glyph $under>U</Glyph></Tool><Drop label="下划线选项" />
            <Divider /><Tool aria-label="边框"><Borders /></Tool><Drop label="边框选项" />
            <Divider /><Tool aria-label="填充颜色"><Fill /></Tool><Drop label="填充颜色选项" />
            <Tool aria-label="字体颜色"><FontColor /></Tool><Drop label="字体颜色选项" />
            <Divider /><Tool aria-label="拼音"><Pinyin /></Tool><Drop label="拼音选项" />
          </ToolRow>
        </TwoRows>
      </GroupBody>
      <Foot name="字体" launcher />
    </Group>

    <Group $w={239}>
      <GroupBody>
        <TwoRows>
          <ToolRow>
            <Tool aria-label="顶端对齐"><Lines d={TOP} /></Tool><Tool $on aria-label="垂直居中"><Lines d={MID} /></Tool><Tool aria-label="底端对齐"><Lines d={BOT} /></Tool>
            <Divider /><Tool $w={44} $left aria-label="方向"><Orient /><Arrow /></Tool><Divider />
            <Tool $w={80} $left><Wrap />自动换行</Tool>
          </ToolRow>
          <ToolRow>
            <Tool aria-label="左对齐"><Lines d={LEFT} /></Tool><Tool $on aria-label="居中"><Lines d={CENTER} /></Tool><Tool aria-label="右对齐"><Lines d={RIGHT} /></Tool>
            <Divider /><Tool aria-label="减少缩进量"><Indent /></Tool><Tool aria-label="增加缩进量"><Indent more /></Tool><Divider />
            <Tool $w={88} $left><Merge />合并后居中</Tool><Drop label="合并选项" />
          </ToolRow>
        </TwoRows>
      </GroupBody>
      <Foot name="对齐方式" launcher />
    </Group>

    <Group $w={140}>
      <GroupBody>
        <TwoRows>
          <ToolRow><Combo w={131} label="数字格式" value="常规" /></ToolRow>
          <ToolRow>
            <Tool aria-label="会计数字格式"><Currency /></Tool><Drop label="会计格式选项" />
            <Tool><Percent>%</Percent></Tool><Tool aria-label="千位分隔"><Comma /></Tool><Divider />
            <Tool aria-label="增加小数位数"><Decimal more /></Tool><Tool aria-label="减少小数位数"><Decimal /></Tool>
          </ToolRow>
        </TwoRows>
      </GroupBody>
      <Foot name="数字" launcher />
    </Group>

    <Group $w={463}>
      <GroupBody $pad={3}>
        <BigButton $w={54}><CondFormat />条件格式<LastLine><Arrow /></LastLine></BigButton>
        <BigButton $w={62}><TableFormat />套用<LastLine>表格格式<Arrow /></LastLine></BigButton>
        <Gallery>
          <Swatches>
            <Swatch $bg="#ff99cc" $fg="#800080">差_Sheet4</Swatch>
            <Swatch $bg="#ccffcc" $fg="#217a35">好_Sheet4</Swatch>
            <Swatch $bg="#fff" $fg="#222">千位分隔 2</Swatch>
            <Swatch $bg="#fff" $fg="#222" $picked>常规</Swatch>
            <Swatch $bg="#ffc7ce" $fg="#9c0006">差</Swatch>
            <Swatch $bg="#c6efce" $fg="#2c7a34">好</Swatch>
          </Swatches>
          <GalleryScroll>
            <button aria-label="向上"><Arrow up color="#bbb" /></button>
            <button aria-label="向下"><Arrow /></button>
            <button aria-label="其他"><Icon w={7} h={7}><path d="M0 .500h7" stroke={GREY} /><path d="M1 3h5L3.500 6z" fill={GREY} /></Icon></button>
          </GalleryScroll>
        </Gallery>
      </GroupBody>
      <Foot name="样式" />
    </Group>

    <Group $w={135}>
      <GroupBody>
        <BigButton $w={42}><InsertCells />插入<LastLine><Arrow /></LastLine></BigButton>
        <BigButton $w={42}><DeleteCells />删除<LastLine><Arrow /></LastLine></BigButton>
        <BigButton $w={42}><FormatCells />格式<LastLine><Arrow /></LastLine></BigButton>
      </GroupBody>
      <Foot name="单元格" />
    </Group>

    <Group $w={229}>
      <GroupBody $pad={7}>
        <SmallColumn $w={88}>
          <SmallButton $far><Sigma /><span>自动求和</span><Arrow /></SmallButton>
          <SmallButton><FillDown /><span>填充</span><Arrow /></SmallButton>
          <SmallButton><Eraser /><span>清除</span><Arrow /></SmallButton>
        </SmallColumn>
        <BigButton $w={64}><SortFilter />排序和筛选<LastLine><Arrow /></LastLine></BigButton>
        <BigButton $w={64}><Find />查找和选择<LastLine><Arrow /></LastLine></BigButton>
      </GroupBody>
      <Foot name="编辑" />
    </Group>

    <Group $w={55}>
      <GroupBody $pad={0}><BigButton $w={54}><Invoice />发票<LastLine>查验</LastLine></BigButton></GroupBody>
      <Foot name="发票查验" />
    </Group>
    <Collapse aria-label="折叠功能区"><Chevron up /></Collapse>
  </Ribbon>
);

const Mini = () => (
  <MiniToolbar role="toolbar" aria-label="浮动工具栏">
    <ToolRow>
      <Combo w={68} label="浮动字体" value="等线" /><Combo w={49} label="浮动字号" value="11" />
      <Tool $w={24} aria-label="增大字号"><FontSize up /></Tool><Tool aria-label="减小字号"><FontSize /></Tool>
      <Tool aria-label="会计数字格式"><Currency /></Tool><Drop label="会计格式选项" />
      <Tool><Percent>%</Percent></Tool><Tool aria-label="千位分隔"><Comma /></Tool><Tool aria-label="合并后居中"><Merge /></Tool>
    </ToolRow>
    <ToolRow>
      <Tool><Glyph>B</Glyph></Tool><Tool><Glyph $italic>I</Glyph></Tool><Tool $on aria-label="居中"><Lines d={CENTER} /></Tool>
      <Tool aria-label="填充颜色"><Fill /></Tool><Drop label="填充颜色选项" />
      <Tool aria-label="字体颜色"><FontColor red="#e00000" /></Tool><Drop label="字体颜色选项" />
      <Tool aria-label="边框"><Borders /></Tool><Drop label="边框选项" />
      <Tool aria-label="增加小数位数"><Decimal more /></Tool><Tool aria-label="减少小数位数"><Decimal /></Tool><Tool aria-label="格式刷"><Painter /></Tool>
    </ToolRow>
  </MiniToolbar>
);

const Menu = () => (
  <ContextMenu role="menu">
    <Item text="剪切" k="T" icon={<Cut />} />
    <Item text="复制" k="C" icon={<Copy />} />
    <MenuHeading><MenuIcon><PasteSmall /></MenuIcon><b>粘贴选项:</b></MenuHeading>
    <PasteRow><button aria-label="保留源格式"><PasteOption brush /></button><button aria-label="只保留文本"><PasteOption /></button></PasteRow>
    <Item text="选择性粘贴" k="S" more />
    <MenuLine />
    <Item text="智能查找" k="L" icon={<Find info />} />
    <MenuLine />
    <Item text="插入" k="I" more />
    <Item text="删除" k="D" more />
    <Item text="清除内容" k="N" />
    <MenuLine />
    <Item text="快速分析" k="Q" icon={<Analysis />} off />
    <Item text="筛选" k="E" sub />
    <Item text="排序" k="O" sub />
    <MenuLine />
    <Item text="插入批注" k="M" icon={<Comment />} />
    <MenuLine />
    <Item text="设置单元格格式" k="F" more icon={<FormatDialog />} hot />
    <Item text="从下拉列表中选择" k="K" more />
    <Item text="显示拼音字段" k="S" icon={<Pinyin />} />
    <Item text="定义名称" k="A" more />
    <Item text="超链接" k="I" more icon={<Link />} />
  </ContextMenu>
);

const Sheet = () => (
  <SheetArea>
    <GridView>
      <Grid>
        <thead>
          <tr>
            <ColHead $w={29}><Icon w={11} h={11}><path d="M11 0v11H0z" fill="#b4b4b4" /></Icon></ColHead>
            {COLUMNS.map(c => <ColHead key={c} $w={252} $sel={c === "D"} scope="col">{c}</ColHead>)}
          </tr>
        </thead>
        <tbody>
          {ROWS.map(r => (
            <tr key={r}>
              <RowHead scope="row" $sel={r >= 2 && r <= 5}>{r}</RowHead>
              {COLUMNS.map((c, i) => (
                <Cell key={c} $dashed={DASHED.includes(i)} $fill={c === "D" && r >= 3 && r <= 5} $anchor={c === "D" && r === 2}>
                  {DATA[r - 1]?.[i]}
                </Cell>
              ))}
            </tr>
          ))}
        </tbody>
      </Grid>
    </GridView>
    <VScroll>
      <ScrollButton aria-label="向上滚动"><Arrow up /></ScrollButton><span />
      <ScrollButton aria-label="向下滚动"><Arrow /></ScrollButton>
    </VScroll>
    <Mini />
    <Menu />
    <Pointer width="14" height="21" viewBox="0 0 14 21" aria-hidden="true">
      <path d="M1 1v15.500l3.500-3.300 2.600 6 2.600-1.100-2.600-5.900H12z" fill="#fff" stroke="#222" />
    </Pointer>
  </SheetArea>
);

export default function App() {
  return (
    <Window>
      <Global />
      <TitleBar>
        <Title>工作簿3.xlsx - Excel</Title>
        <WindowButtons>
          <WindowButton aria-label="功能区显示选项"><Icon w={13} h={10}><path d="M.5.500h12v9H.5zM0 2.500h13M6.500 9V4.500M4.500 6.500l2-2 2 2" stroke="#fff" /></Icon></WindowButton>
          <WindowButton aria-label="最小化"><Icon w={9} h={8}><path d="M0 6h9" stroke="#fff" strokeWidth="2" /></Icon></WindowButton>
          <WindowButton aria-label="还原"><Icon w={10} h={10}><path d="M.5.500h9v9h-9z" stroke="#fff" /><path d="M0 1.500h10" stroke="#fff" strokeWidth="3" /></Icon></WindowButton>
          <WindowButton aria-label="关闭"><Icon w={10} h={10}><path d="m1 1 8 8M9 1 1 9" stroke="#fff" strokeWidth="2" /></Icon></WindowButton>
        </WindowButtons>
      </TitleBar>
      <TabBar>
        <Tab $file>文件</Tab>
        <Tab $active>开始</Tab>
        {["插入", "页面布局", "公式", "数据", "审阅", "视图", "开发工具", "PDF工具集"].map(t => <Tab key={t}>{t}</Tab>)}
        <TellMe>
          <Icon w={11} h={14}><path d="M3.500 10V8.500C.500 6.500.500 1 5.500 1s5 5.500 2 7.500V10zM3.500 12.500h4" stroke="#a6cdb6" strokeWidth="1.500" /></Icon>
          <input aria-label="告诉我您想要做什么" placeholder="告诉我您想要做什么..." />
        </TellMe>
        <Account>登录</Account>
        <Share><Icon w={15} h={17}><circle cx="7" cy="5.500" r="4.500" stroke="#fff" strokeWidth="1.500" /><path d="M1 16c0-4 2-6 5-6.500M7.500 12.500H15M11.500 9v7" stroke="#fff" strokeWidth="1.500" /></Icon>共享</Share>
      </TabBar>
      <RibbonBar />
      <QuickAccess>
        <QuickSlot $w={50}><button aria-label="保存"><Save /></button></QuickSlot>
        <QuickSlot $w={51}><button aria-label="恢复"><Undo redo /></button><Arrow color="#c4c4c4" /></QuickSlot>
        <QuickSlot $w={53}><button aria-label="撤消"><Undo /></button><Arrow /></QuickSlot>
        <QuickSlot $w={55}><button aria-label="快速打印"><QuickPrint /></button></QuickSlot>
        <QuickSlot $w={50}><button aria-label="打印预览"><Preview /></button></QuickSlot>
      </QuickAccess>
      <FormulaRow>
        <Field $w={124}><input aria-label="名称框" defaultValue="D2" /><Icon w={7} h={4}><path d="M0 0h7L3.500 4z" fill={GREY} /></Icon></Field>
        <Grip><Dots /></Grip>
        <FormulaButtons>
          <button aria-label="取消"><Icon w={11} h={11}><path d="m1 1 9 9M10 1l-9 9" stroke="#bbb" strokeWidth="2" /></Icon></button>
          <button aria-label="输入"><Icon w={13} h={11}><path d="m1 6 4 4 7-9" stroke="#bbb" strokeWidth="2.200" /></Icon></button>
          <button aria-label="插入函数"><Fx>f<sub>x</sub></Fx></button>
        </FormulaButtons>
        <Field><input aria-label="编辑栏" /><Chevron /></Field>
      </FormulaRow>
      <Sheet />
      <SheetBar>
        <SheetNav><button aria-label="上一张"><SideArrow left color="#c0c0c0" /></button><button aria-label="下一张"><SideArrow color="#c0c0c0" /></button></SheetNav>
        <SheetTab><span>成绩表</span></SheetTab>
        <SheetTab><span>员工信息</span></SheetTab>
        <SheetTab><span>田字格</span></SheetTab>
        <SheetTab $tint="#bdd7ee"><span>XXX公司销售额</span></SheetTab>
        <SheetTab $tint="#f4b084"><span>课程表</span></SheetTab>
        <SheetTab><span>Sheet5</span></SheetTab>
        <SheetTab $active><span>Sheet1</span></SheetTab>
        <AddSheet aria-label="新工作表"><Icon w={17} h={17}><circle cx="8.500" cy="8.500" r="7.500" stroke="#777" /><path d="M8.500 4.500v8M4.500 8.500h8" stroke="#777" strokeWidth="1.600" /></Icon></AddSheet>
        <HScroll>
          <Dots />
          <HTrack>
            <ScrollButton aria-label="向左滚动"><SideArrow left /></ScrollButton><span />
            <ScrollButton aria-label="向右滚动"><SideArrow /></ScrollButton>
          </HTrack>
        </HScroll>
      </SheetBar>
      <StatusBar>
        <StatusText>就绪</StatusText>
        <StatusText>数字</StatusText>
        <Icon w={13} h={13}><path d="M1.500 5v7.500h11v-10H6" stroke="#777" /><circle cx="3" cy="3" r="3" fill="#666" /><path d="M6 1h7v3H6z" fill="#777" /><path d="M3 7.500h8M3 10.500h8" stroke="#777" strokeDasharray="2 1" /></Icon>
        <Views>
          <ViewButton $on aria-label="普通"><ViewIcon d="M.5.500h13v12H.5zM0 4.500h14M0 8.500h14M5 0v13M9.500 0v13" /></ViewButton>
          <ViewButton aria-label="页面布局视图"><ViewIcon d="M.5.500h13v13H.5zM3.500 2.500h7v9h-7zM5 4.500h4M5 6.500h4M5 8.500h4" /></ViewButton>
          <ViewButton aria-label="分页预览"><ViewIcon d="M.5.500h13v12H.5zM4.500 0v8M9.500 0v8M0 8.500h10" /></ViewButton>
        </Views>
        <ZoomBox>
          <button aria-label="缩小"><Icon w={10} h={10}><path d="M3 5h6" stroke="#555" strokeWidth="2" /></Icon></button>
          <ZoomSlider type="range" aria-label="缩放" min={0} max={100} defaultValue={50} />
          <button aria-label="放大"><Icon w={8} h={10}><path d="M0 5h8M4 1v8" stroke="#555" strokeWidth="2" /></Icon></button>
          <span>100%</span>
        </ZoomBox>
      </StatusBar>
      <Watermark>
        <svg width="44" height="40" viewBox="0 0 44 40" aria-hidden="true">
          <defs>
            <linearGradient id="swirl" x1="0" y1="0" x2="0.300" y2="1"><stop offset="0" stopColor="#5db4ee" /><stop offset="0.550" stopColor="#2f79c4" /><stop offset="1" stopColor="#2f79c4" /></linearGradient>
            <linearGradient id="leaf" x1="1" y1="0" x2="0" y2="1"><stop offset="0" stopColor="#2fa64a" /><stop offset="0.600" stopColor="#7cc242" /><stop offset="1" stopColor="#f3d531" /></linearGradient>
          </defs>
          <path d="M2 30 -38 34 -20 16 -4 2 -8 14 6 6z" fill="#fff" opacity="0.600" />
          <path d="M42 3C30-2 12 4 5 16c-5 9-1 16 5 15-3-5-1-12 5-18C22 6 32 3 42 3z" fill="url(#swirl)" />
          <path d="M36 10c-9-1-19 4-21 11-1 5 4 8 9 6 4-2 6-5 7-8l-8 2c0 2-3 4-4 2-1-4 8-10 17-13z" fill="url(#swirl)" />
          <path d="M34 17c5 1 5 8-3 15-8 6-18 8-26 6 10-1 18-4 22-9 4-4 6-8 7-12z" fill="url(#leaf)" />
        </svg>
        <WatermarkText>极光下载站<small>www.xz7.com</small></WatermarkText>
      </Watermark>
    </Window>
  );
}
